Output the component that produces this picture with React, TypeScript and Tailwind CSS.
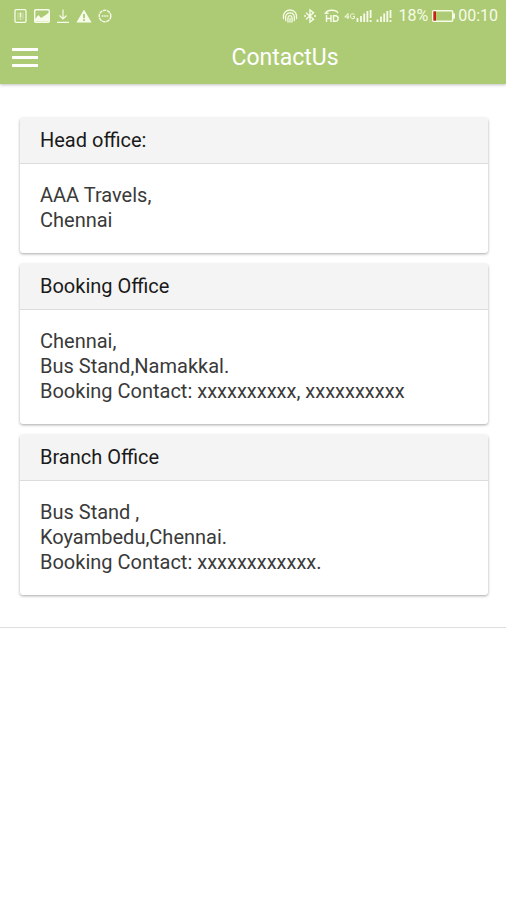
const offices = [
  {
    title: 'Head office:',
    lines: ['AAA Travels,', 'Chennai']
  },
  {
    title: 'Booking Office',
    lines: ['Chennai,', 'Bus Stand,Namakkal.', 'Booking Contact: xxxxxxxxxx, xxxxxxxxxx']
  },
  {
    title: 'Branch Office',
    lines: ['Bus Stand ,', 'Koyambedu,Chennai.', 'Booking Contact: xxxxxxxxxxxx.']
  }
];

function NotificationIcons() {
  return (
    <div className="flex items-center gap-1.5">
      <svg className="h-4 w-3.5" viewBox="0 0 14 16" fill="none" stroke="currentColor" aria-hidden="true">
        <rect x="1" y="1.700" width="11" height="12.600" rx="1.200" strokeWidth="1.300" />
        <path d="M6.500 4.500v5M6.500 10.500v1.200" strokeWidth="1.600" />
        <path d="M4 4.500v7M9 4.500v7" strokeWidth="0.500" />
      </svg>
      <svg className="h-4 w-4" viewBox="0 0 16 16" aria-hidden="true">
        <rect x="0.700" y="1.700" width="14.600" height="12.600" rx="1" fill="none" stroke="currentColor" strokeWidth="1.400" />
        <path d="M1 13.500V11l3.500-4 2.500 3 4-2.500L15 4.500v9z" fill="currentColor" />
      </svg>
      <svg className="h-4 w-3.5" viewBox="0 0 14 16" fill="none" stroke="currentColor" strokeWidth="1.200" aria-hidden="true">
        <path d="M7 1.500v9.500M3.500 7.500 7 11l3.500-3.500M1 14.300h12" />
      </svg>
      <svg className="h-4 w-4" viewBox="0 0 16 16" aria-hidden="true">
        <path fill="currentColor" fillRule="evenodd" d="M8 1.500 15.600 14.400H.4zM7.100 6v4.200h1.800V6zm0 5.200V13h1.800v-1.800z" />
      </svg>
      <svg className="h-4 w-4" viewBox="0 0 16 16" fill="none" stroke="currentColor" aria-hidden="true">
        <circle cx="7" cy="8" r="5.800" strokeWidth="1.400" strokeDasharray="3.400 0.700" />
        <path d="M3.800 8h1.600M6.200 8h1.600M8.600 8h1.600" strokeWidth="1.400" />
      </svg>
    </div>
  );
}

function SystemIcons() {
  return (
    <div className="flex items-center">
      <svg className="mr-1.5 h-4 w-4" viewBox="0 0 16 16" fill="none" stroke="currentColor" strokeWidth="1.300" strokeLinecap="round" aria-hidden="true">
        <path d="M1.500 10.500C.5 5.500 3.700 2 8 2s7.500 3.500 6.500 8.500M3.700 12.500C2.700 8 4.500 4.800 8 4.800s5.300 3.200 4.300 7.700M6 14C5.500 10 6.200 7.600 8 7.600S10.500 10 10 14M8 10.500V14" />
      </svg>
      <svg className="mr-2 h-4 w-3" viewBox="2 0 12 16" fill="none" stroke="currentColor" strokeWidth="1.400" aria-hidden="true">
        <path d="m4 4.800 7.500 6.400L8 14V2l3.500 2.800L4 11.200M2 8h2M12 8h2" />
      </svg>
      <svg className="mr-1 h-4 w-4" viewBox="0 0 16 16" fill="none" stroke="currentColor" strokeWidth="1.400" aria-hidden="true">
        <path d="M1.500 5.500C3 1.300 12 1.300 14 5M.5 5.200h4M2.500 7v7M2.500 10.500h4.300M7 7v7M9.500 7.700h1.700c4 0 4 5.600 0 5.600H9.500z" />
      </svg>
      <svg className="mr-1 h-4 w-7" viewBox="0 0 28 16" fill="none" stroke="currentColor" aria-hidden="true">
        <path d="M4 11V5.500L.8 9H5.200M10.500 6.500C8.500 5 6.500 6 6.500 8.200s2 3.300 4 2V8.500H9" strokeWidth="1" />
        <path d="M13.500 14v-4M17 14V8M20.200 14V5.500M23.400 14V3M26.600 2v8M26.600 12V14" strokeWidth="1.800" />
      </svg>
      <svg className="mr-1.5 h-4 w-4" viewBox="0 0 16 16" fill="none" stroke="currentColor" strokeWidth="1.800" aria-hidden="true">
        <path d="M1.500 14v-2.500M5 14V8.500M8.200 14V5.500M11.300 14V3M14.500 2v8M14.500 12V14" />
      </svg>
      <span className="text-base leading-6">18%</span>
      <svg className="mr-0.5 ml-1 h-4 w-6" viewBox="0 0 24 16" aria-hidden="true">
        <rect x="0.700" y="2.700" width="20" height="10.600" rx="1" fill="none" stroke="currentColor" strokeWidth="1.400" />
        <path d="M21 5.500h2v5h-2z" fill="currentColor" />
        <path d="M1.400 3.400H4v9.200H1.400z" fill="#c8200d" />
      </svg>
      <time className="text-base leading-6">00:10</time>
    </div>
  );
}

export default function App() {
  return (
    <div className="min-h-screen bg-white font-['Roboto',sans-serif] text-[#3a3a3a]">
      <header className="bg-[#adcb74] text-white shadow-[0_1px_3px_rgba(0,0,0,0.25)]">
        <div className="flex h-8 items-center justify-between pr-2 pl-[14px] text-[#f7fbe9]">
          <NotificationIcons />
          <SystemIcons />
        </div>
        <div className="grid h-[52px] grid-cols-[64px_1fr] items-center">
          <button type="button" aria-label="Open menu" className="flex h-full flex-col justify-center gap-[5px] pb-0.5 pl-3">
            <span className="h-[3px] w-[26px] bg-white" />
            <span className="h-[3px] w-[26px] bg-white" />
            <span className="h-[3px] w-[26px] bg-white" />
          </button>
          <h1 className="text-center text-[23px] leading-8">ContactUs</h1>
        </div>
      </header>

      <main className="flex flex-col gap-[11px] border-b border-[#dedede] pt-[34px] pr-[18px] pb-8 pl-5">
        {offices.map((office) => (
          <section key={office.title} className="overflow-hidden rounded-[3px] bg-white shadow-[0_1px_3px_rgba(0,0,0,0.35)]">
            <h2 className="border-b border-[#dcdcdc] bg-[#f4f4f4] px-5 py-[10px] text-[20px] leading-[25px] text-[#1a1a1a]">
              {office.title}
            </h2>
            <address className="px-5 pt-[19px] pb-5 text-[20px] leading-[25px] not-italic">
              {office.lines.map((line) => (
                <p key={line}>{line}</p>
              ))}
            </address>
          </section>
        ))}
      </main>
    </div>
  );
}
